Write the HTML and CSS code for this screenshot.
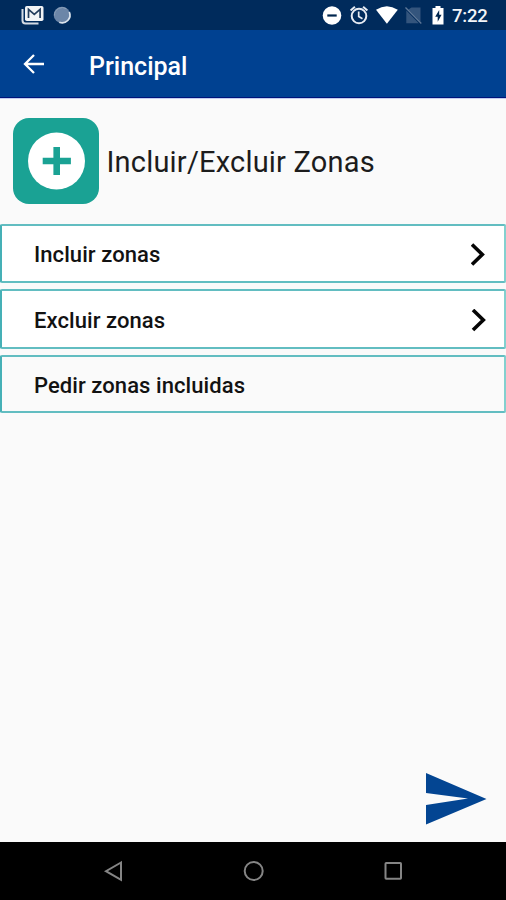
FILE: index.html
```html
<!DOCTYPE html>
<html lang="es">
<head>
<meta charset="utf-8">
<title>Principal</title>
<link rel="stylesheet" href="styles.css">
</head>
<body>
<div class="screen">
  <div class="status">
    <svg class="status-left" width="90" height="30" viewBox="0 0 90 30">
      <path d="M22.500 9v11.500q0 3 3 3h13" fill="none" stroke="#d4dbe4" stroke-width="2"/>
      <rect x="25" y="6" width="18.500" height="15" rx="1.800" fill="#f2f4f6"/>
      <path d="M28.500 18V9.300l5.800 5 5.800-5V18" fill="none" stroke="#233d5c" stroke-width="1.700"/>
      <circle cx="62" cy="15" r="8.300" fill="#6c86a8"/>
      <path d="M69.300 12a7.700 7.700 0 0 1-10 10.200" fill="none" stroke="#dce4ed" stroke-width="1.700"/>
      <path d="M54.500 15.500a7.700 7.700 0 0 1 12-6.600" fill="none" stroke="#8ba0b9" stroke-width="1"/>
    </svg>
    <svg class="status-right" width="130" height="30" viewBox="320 0 130 30">
      <circle cx="332" cy="15.500" r="9.300" fill="#fff"/>
      <path d="M327.300 15.500h9.400" stroke="#00264f" stroke-width="2.200"/>
      <g fill="none" stroke="#e6ebf2">
        <circle cx="359" cy="16" r="7.300" stroke-width="2"/>
        <path d="M350.600 10.400l4.300-3.700M367.400 10.400l-4.300-3.700" stroke-width="2"/>
        <path d="M358.700 11.500v5l3.800 2.300" stroke-width="1.700"/>
      </g>
      <path d="M376 9.800Q386.800 2.700 397.800 9.800L386.900 23.700Z" fill="#fff"/>
      <path d="M411.500 7.500h9v14.200L408.300 9.500ZM406.300 10.500l12.500 12.700H406.300Z" fill="#34557d"/>
      <path d="M405.500 7.500l15.800 16" stroke="#5f7898" stroke-width="1.300"/>
      <path d="M435.500 6h5v2h3v16.500h-11V8h3Z" fill="#fff"/>
      <path d="M439.200 10l-4 6.800h2.500v5l3.900-7.100h-2.400Z" fill="#00264f"/>
    </svg>
    <span class="clock">7:22</span>
  </div>
  <header class="appbar">
    <svg class="back" width="24" height="24" viewBox="0 0 24 24"><path d="M22 12H3.500M12 3L3 12l9 9" fill="none" stroke="#fff" stroke-width="2.300"/></svg>
    <span class="title">Principal</span>
  </header>
  <main>
    <div class="heading">
      <svg class="logo" width="86" height="86" viewBox="0 0 86 86">
        <rect width="86" height="86" rx="16" fill="#1aa294"/>
        <circle cx="43.500" cy="43" r="28.500" fill="#fff"/>
        <path d="M43.700 29v28M29.700 43h28.200" stroke="#1aa294" stroke-width="6.600"/>
      </svg>
      <h1>Incluir/Excluir Zonas</h1>
    </div>
    <div class="list">
      <div class="row"><span>Incluir zonas</span><svg width="16" height="24" viewBox="0 0 16 24"><path d="M1 1.500l10.300 10L1 21.500" fill="none" stroke="#050505" stroke-width="3.600"/></svg></div>
      <div class="row"><span>Excluir zonas</span><svg width="16" height="24" viewBox="0 0 16 24"><path d="M2 1l10.300 10L2 21" fill="none" stroke="#050505" stroke-width="3.600"/></svg></div>
      <div class="row plain"><span>Pedir zonas incluidas</span></div>
    </div>
    <svg class="send" width="62" height="54" viewBox="0 0 62 54"><path d="M1 1L61.500 27 1 52.500V33l42-6.500L1 21Z" fill="#034592"/></svg>
  </main>
  <nav class="navbar">
    <svg width="506" height="58" viewBox="0 0 506 58" fill="none" stroke="#858585" stroke-width="2">
      <path d="M121 20.500L106 29.200l15 8.600Z"/>
      <circle cx="253.700" cy="29" r="9"/>
      <rect x="385.500" y="21" width="15.500" height="15.800" rx=".7"/>
    </svg>
  </nav>
</div>
</body>
</html>
```
FILE: styles.css
```css
body { margin: 0; font-family: Roboto, sans-serif; }
.screen { width: 506px; height: 900px; display: flex; flex-direction: column; overflow: hidden; background: #fafafa; }
.status { height: 30px; display: flex; background: #002b5c; color: #fff; }
.status svg { display: block; flex: none; }
.status-right { margin-left: 230px; }
.clock { margin-left: 2px; font-size: 18.5px; font-weight: 500; line-height: 32px; letter-spacing: -.2px; color: #f3f5f8; white-space: nowrap; }
.appbar { box-sizing: border-box; height: 69px; display: flex; align-items: center; padding-left: 22px; background: #004191; border-bottom: 1px solid #c3cdf0; box-shadow: inset 0 -1px #00137a; color: #fff; }
.back { flex: none; }
.title { margin: 6px 0 0 43px; font-size: 25px; font-weight: 500; line-height: 30px; }
main { flex: 1; display: flex; flex-direction: column; min-height: 0; }
.heading { height: 86px; display: flex; align-items: center; padding: 19px 0 20px 13px; }
h1 { margin: 2px 0 0 7.5px; font-size: 29px; font-weight: 400; line-height: 36px; letter-spacing: .2px; color: #1c1c1c; white-space: nowrap; }
.list { display: grid; grid-template-rows: 59px 59px 58px; row-gap: 6.5px; }
.row { box-sizing: border-box; display: flex; align-items: center; justify-content: space-between; padding: 2px 17px 0 32px; border: 2px solid #62bdc1; border-left-color: #45b0b6; border-right-color: #83d0cf; border-radius: 2px; background: #fff; font-size: 22px; font-weight: 500; letter-spacing: .07px; color: #121212; }
.row + .row { margin-top: -.5px; padding-top: 4px; }
.plain { background: #fafafa; }
.send { margin: auto 19px 16px auto; }
.navbar { height: 58px; background: #000; }
.navbar svg { display: block; }
```
